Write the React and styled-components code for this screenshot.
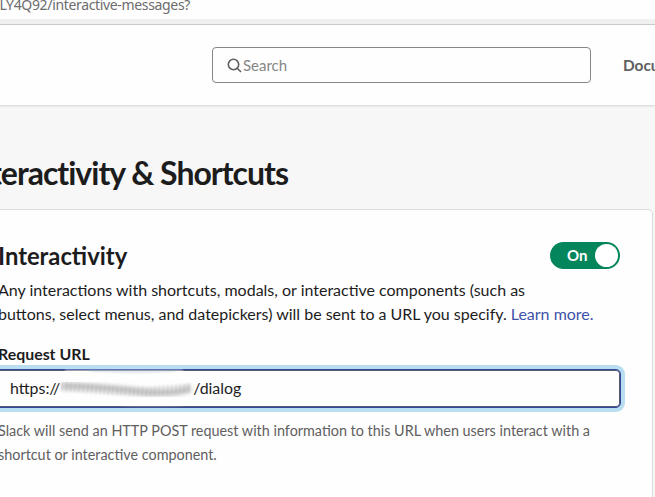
import React from 'react';
import styled, { createGlobalStyle } from 'styled-components';

const Global = createGlobalStyle`
  * { box-sizing: border-box; }
  body { margin: 0; background: #f7f7f7; }
`;
const Page = styled.div`
  width: 655px;
  height: 497px;
  overflow: hidden;
  display: flex;
  flex-direction: column;
  background: #f7f7f7;
  color: #1d1c1d;
  font-family: Lato, sans-serif;
`;
const AddressBar = styled.div`
  flex: none;
  height: 25px;
  background: #fefefe;
  border-bottom: 1px solid #cbcbcb;
  box-shadow: inset 0 -5px #f0f0f0;
  overflow: hidden;
`;
const Address = styled.div`
  width: 190px;
  margin-top: -5px;
  display: flex;
  justify-content: flex-end;
  white-space: nowrap;
  font: 14px/20px 'Noto Sans', sans-serif;
  letter-spacing: -0.34px;
  color: #6c6c6c;
`;
const Header = styled.header`
  flex: none;
  height: 81px;
  display: flex;
  align-items: center;
  padding-left: 212px;
  background: #fefefe;
  border-bottom: 1px solid #dedede;
  box-shadow: 0 1px 2px rgba(0, 0, 0, 0.07);
`;
const SearchBox = styled.div`
  flex: none;
  width: 379px;
  height: 36px;
  display: flex;
  align-items: center;
  gap: 1px;
  padding-left: 14px;
  border: 1px solid #868686;
  border-radius: 4px;
  color: #868686;
  font-size: 15px;
`;
const NavLink = styled.a`
  margin-left: 32px;
  color: #616061;
  font-size: 15.4px;
  font-weight: 700;
`;
const Title = styled.h1`
  flex: none;
  width: 288px;
  height: 103px;
  margin: 0;
  padding-top: 47px;
  display: flex;
  justify-content: flex-end;
  white-space: nowrap;
  font-size: 32px;
  line-height: 40px;
  font-weight: 700;
  letter-spacing: -1px;
`;
const Card = styled.section`
  flex: none;
  width: 683px;
  height: 310px;
  margin-left: -30px;
  padding: 32px 32px 0 27px;
  background: #fefefe;
  border: 1px solid #dddddd;
  border-radius: 5px;
  box-shadow: 0 1px 2px rgba(0, 0, 0, 0.06);
`;
const CardHead = styled.div`
  display: flex;
  justify-content: space-between;
  height: 36px;
`;
const Heading = styled.h2`
  margin: 0;
  font-size: 23.8px;
  line-height: 29px;
  font-weight: 700;
`;
const Toggle = styled.div`
  width: 70px;
  height: 27px;
  display: flex;
  align-items: center;
  justify-content: space-between;
  padding: 0 2px 0 17px;
  border-radius: 14px;
  background: #04855c;
  color: #fff;
  font-size: 15px;
  line-height: 27px;
  font-weight: 700;
`;
const ToggleText = styled.span`
  height: 27px;
`;
const Knob = styled.span`
  width: 23px;
  height: 23px;
  border-radius: 50%;
  background: #fff;
`;
const Copy = styled.p`
  margin: 0;
  white-space: nowrap;
  font-size: ${(p) => (p.$muted ? '14.39px' : '15.99px')};
  line-height: 24px;
  color: ${(p) => (p.$muted ? '#616061' : '#1d1c1d')};
`;
const Link = styled.a`
  color: #3f51a8;
`;
const Label = styled.div`
  margin-top: 18px;
  height: 25px;
  font-size: 15.9px;
  line-height: 20px;
  font-weight: 700;
`;
const UrlField = styled.div`
  height: 39px;
  margin: 0 -1px 11px -8px;
  display: flex;
  align-items: center;
  padding: 0 0 2px 19px;
  border: 1px solid #31479c;
  border-radius: 5px;
  box-shadow: inset 0 0 0 1px #555c70, 0 0 0 4px #b9def2;
  background: #fefefe;
  font-size: 15.9px;
`;
const Smudge = styled.svg`
  flex: none;
  width: 136px;
  height: 40px;
  margin: 0 -2px 0 -1px;
  overflow: visible;
`;

const strokes = Array.from({ length: 31 }, (_, i) => {
  const x = 3 + i * 4.2;
  const y = 14 + 5 * Math.sin((Math.min(i, 22) / 22) * 1.6) - (i > 20 ? (i - 20) * 0.35 : 0);
  return `M${x + 1} ${y}L${x} ${y + 9}`;
}).join('');

function Redaction() {
  return (
    <Smudge viewBox="0 0 136 40" aria-hidden="true">
      <defs>
        <filter id="soft" x="-10%" y="-50%" width="120%" height="200%">
          <feGaussianBlur stdDeviation="0.8" />
        </filter>
        <filter id="haze" x="-10%" y="-50%" width="120%" height="200%">
          <feGaussianBlur stdDeviation="1.9" />
        </filter>
        <filter id="fade" filterUnits="userSpaceOnUse" x="-10" y="-10" width="156" height="60">
          <feGaussianBlur stdDeviation="0.9" />
        </filter>
      </defs>
      <path d="M6 3.2Q68 3 124 3.2" fill="none" stroke="#fefefe" strokeWidth="1.8" opacity=".8" filter="url(#fade)" />
      <path d="M30 2Q80 5.5 118 2" fill="none" stroke="#7fa0cb" strokeWidth="1.2" opacity=".65" filter="url(#fade)" />
      <path d="M62 37Q92 38 124 37" fill="none" stroke="#fefefe" strokeWidth="1.2" opacity=".5" filter="url(#fade)" />
      <path d="M3 18Q35 18 75 23T132 20" fill="none" stroke="#aaa" strokeWidth="7" opacity=".6" filter="url(#haze)" />
      <path d={strokes} fill="none" stroke="#858585" strokeWidth="1.4" opacity=".45" filter="url(#soft)" />
    </Smudge>
  );
}

export default function App() {
  return (
    <>
      <Global />
      <Page>
        <AddressBar><Address>LY4Q92/interactive-messages?</Address></AddressBar>
        <Header>
          <SearchBox>
            <svg width="15" height="15" viewBox="0 0 15 15" fill="none" stroke="#616061" strokeWidth="1.6">
              <circle cx="6.5" cy="6.5" r="5.2" />
              <path d="M10.2 10.2L14 14" />
            </svg>
            Search
          </SearchBox>
          <NavLink>Documentation</NavLink>
        </Header>
        <Title>Interactivity &amp; Shortcuts</Title>
        <Card>
          <CardHead>
            <Heading>Interactivity</Heading>
            <Toggle><ToggleText>On</ToggleText><Knob /></Toggle>
          </CardHead>
          <Copy>
            Any interactions with shortcuts, modals, or interactive components (such as<br />
            buttons, select menus, and datepickers) will be sent to a URL you specify. <Link>Learn more.</Link>
          </Copy>
          <Label>Request URL</Label>
          <UrlField><span>https://</span><Redaction /><span>/dialog</span></UrlField>
          <Copy $muted>
            Slack will send an HTTP POST request with information to this URL when users interact with a<br />
            shortcut or interactive component.
          </Copy>
        </Card>
      </Page>
    </>
  );
}
